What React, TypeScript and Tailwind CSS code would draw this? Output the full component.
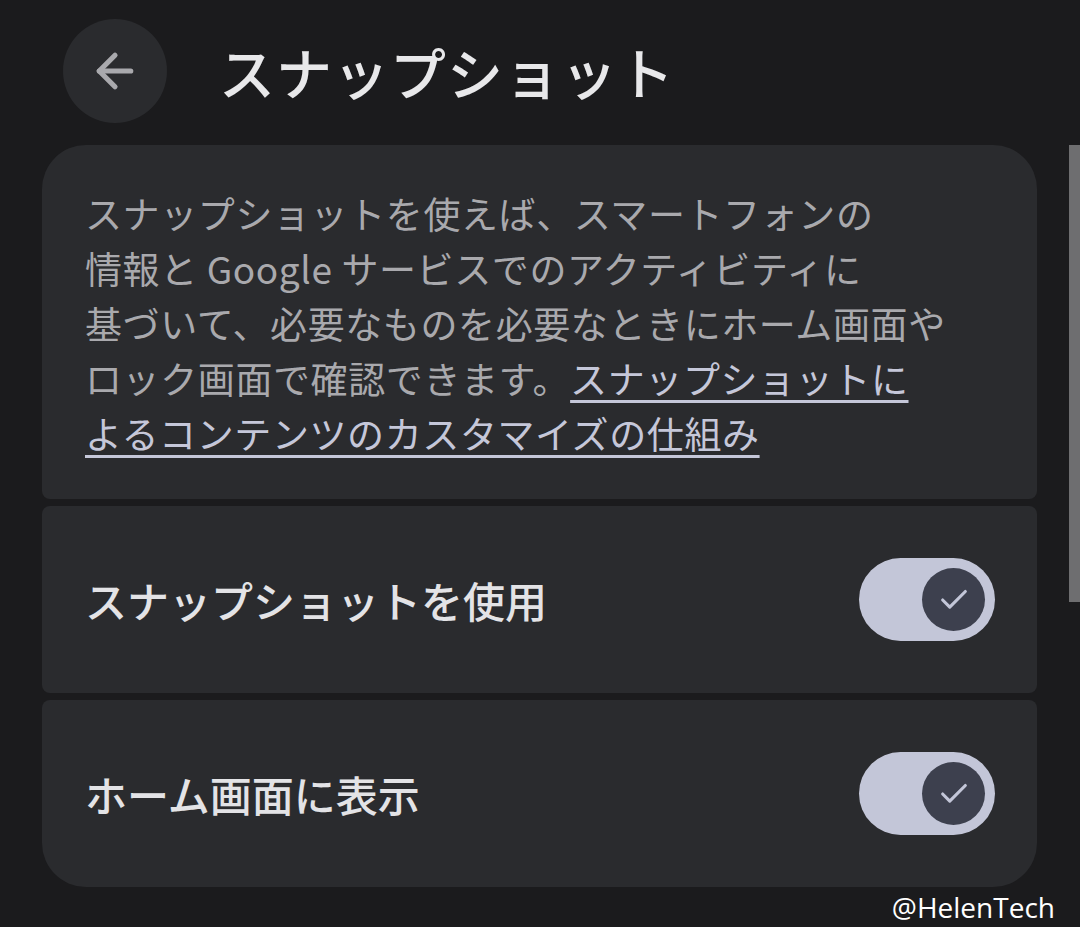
import { ArrowLeft, Check } from "lucide-react";

const font = { fontFamily: '"Noto Sans CJK JP", "Noto Sans", sans-serif' };

const Toggle = () => (
  <div className="w-[136px] h-[83px] rounded-full bg-[#c3c6d8] flex items-center justify-end pr-[10px]">
    <div className="w-[63px] h-[63px] rounded-full bg-[#3d404e] flex items-center justify-center">
      <Check className="w-[34px] h-[34px] text-[#c3c6d8]" strokeWidth={2.2} />
    </div>
  </div>
);

const SettingRow = ({ label, last }: { label: string; last?: boolean }) => (
  <div
    className={`h-[187px] bg-[#2a2b2e] flex items-center justify-between pl-[43px] pr-[42px] ${
      last ? "rounded-t-[8px] rounded-b-[44px]" : "rounded-[8px]"
    }`}
  >
    <span className="text-[42px] font-medium text-[#e3e3e6] leading-none">{label}</span>
    <Toggle />
  </div>
);

export default function App() {
  return (
    <div className="relative w-[1080px] h-[927px] bg-[#1b1b1d] overflow-hidden" style={font}>
      <div className="flex items-center h-[145px] pl-[63px] pb-[4px]">
        <button className="w-[104px] h-[104px] rounded-full bg-[#2a2b2e] flex items-center justify-center">
          <ArrowLeft className="w-[54px] h-[54px] text-[#a9a9ad]" strokeWidth={2.3} />
        </button>
        <h1 className="ml-[52px] text-[56px] font-medium text-[#e8e8ea] leading-none tracking-[1px]">
          スナップショット
        </h1>
      </div>

      <div className="flex">
        <div className="ml-[42px] w-[995px] flex flex-col gap-[7px]">
          <div className="h-[354px] bg-[#2a2b2e] rounded-t-[44px] rounded-b-[8px] pl-[43px] pt-[41px]">
            <p className="text-[37px] leading-[55px] tracking-[0.6px] text-[#a9a9ad] whitespace-nowrap">
              スナップショットを使えば、スマートフォンの
              <br />
              情報と Google サービスでのアクティビティに
              <br />
              基づいて、必要なものを必要なときにホーム画面や
              <br />
              ロック画面で確認できます。
              <span className="text-[#c5c7d9] underline decoration-[3px] underline-offset-[6px]">
                スナップショットに
                <br />
                よるコンテンツのカスタマイズの仕組み
              </span>
            </p>
          </div>
          <SettingRow label="スナップショットを使用" />
          <SettingRow label="ホーム画面に表示" last />
        </div>
        <div className="ml-auto w-[11px] h-[457px] bg-[#6e6e70]" />
      </div>

      <div
        className="absolute right-[25px] bottom-[6px] text-[28px] text-white leading-none"
        style={{ fontFamily: '"Open Sans", Roboto, sans-serif' }}
      >
        @HelenTech
      </div>
    </div>
  );
}
